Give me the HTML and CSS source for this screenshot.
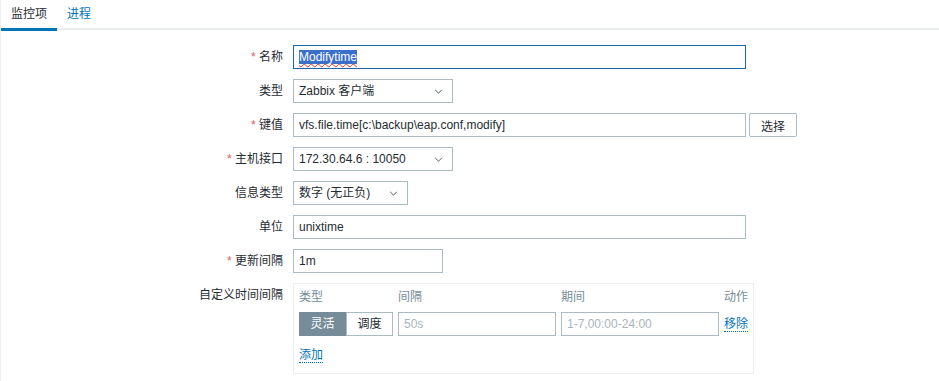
FILE: index.html
```html
<!DOCTYPE html>
<html lang="zh-CN">

<head>
  <meta charset="UTF-8" />
  <title>监控项</title>
  <link rel="stylesheet" href="styles.css">
</head>

<body>
  <!-- Tabs -->
  <div class="tabs">
    <span class="tab active">监控项</span>
    <span class="tab">进程</span>
  </div>

  <!-- Item form -->
  <div class="form">
    <label class="form-label"><span class="req">*</span> 名称</label>
    <div class="field">
      <div class="text-input focused w-wide"><span class="selected">Modifytime</span></div>
    </div>

    <label class="form-label">类型</label>
    <div class="field">
      <div class="select w-160"><span>Zabbix 客户端</span>
        <svg class="chevron" viewBox="0 0 10 6"><path d="M1 1l4 4 4-4" /></svg>
      </div>
    </div>

    <label class="form-label"><span class="req">*</span> 键值</label>
    <div class="field row">
      <input class="text-input w-wide" type="text" value="vfs.file.time[c:\backup\eap.conf,modify]">
      <button class="btn">选择</button>
    </div>

    <label class="form-label"><span class="req">*</span> 主机接口</label>
    <div class="field">
      <div class="select w-160"><span>172.30.64.6 : 10050</span>
        <svg class="chevron" viewBox="0 0 10 6"><path d="M1 1l4 4 4-4" /></svg>
      </div>
    </div>

    <label class="form-label">信息类型</label>
    <div class="field">
      <div class="select w-115"><span>数字 (无正负)</span>
        <svg class="chevron" viewBox="0 0 10 6"><path d="M1 1l4 4 4-4" /></svg>
      </div>
    </div>

    <label class="form-label">单位</label>
    <div class="field">
      <input class="text-input w-wide" type="text" value="unixtime">
    </div>

    <label class="form-label"><span class="req">*</span> 更新间隔</label>
    <div class="field">
      <input class="text-input w-150" type="text" value="1m">
    </div>

    <label class="form-label">自定义时间间隔</label>
    <div class="field">
      <div class="intervals">
        <div class="head">类型</div>
        <div class="head">间隔</div>
        <div class="head">期间</div>
        <div class="head">动作</div>

        <div class="segment">
          <span class="seg active">灵活</span>
          <span class="seg">调度</span>
        </div>
        <input class="text-input" type="text" placeholder="50s">
        <input class="text-input" type="text" placeholder="1-7,00:00-24:00">
        <a class="link">移除</a>

        <div class="add"><a class="link">添加</a></div>
      </div>
    </div>
  </div>
</body>

</html>
```

FILE: styles.css
```css
/* General */
body {
  margin: 0;
  font-family: "Liberation Sans", "Noto Sans CJK SC", sans-serif;
  font-size: 12px;
  color: #1f2c33;
  background: #fff;
  border-left: 1px solid #ebeef0;
  min-height: 381px;
  box-sizing: border-box;
}

/* Tabs */
.tabs {
  display: flex;
  border-bottom: 2px solid #ebeef0;
  height: 28px;
}

.tab {
  padding: 7px 10px 0;
  line-height: 14px;
  color: #0275b8;
  height: 21px;
}

.tab.active {
  color: #1f2c33;
  border-bottom: 3px solid #0275b8;
}

/* Form grid */
.form {
  display: grid;
  grid-template-columns: 282px 1fr;
  column-gap: 10px;
  row-gap: 10px;
  padding-top: 15px;
}

.form-label {
  text-align: right;
  line-height: 24px;
}

.req {
  color: #e45959;
}

.field {
  display: flex;
  align-items: flex-start;
}

.field.row {
  gap: 3px;
}

/* Inputs */
.text-input {
  box-sizing: border-box;
  height: 24px;
  border: 1px solid #acbbc2;
  padding: 0 5px;
  font-family: inherit;
  font-size: 12px;
  color: #1f2c33;
  background: #fff;
  line-height: 22px;
  outline: none;
  margin: 0;
}

.text-input::placeholder {
  color: #a9b5bb;
}

.text-input.focused {
  border-color: #1f65a6;
}

.selected {
  background: #3a6fcc;
  color: #fff;
  text-decoration: underline wavy #e0342e;
  text-decoration-thickness: 1px;
  text-underline-offset: 2px;
}

.w-wide { width: 453px; }
.w-160 { width: 160px; }
.w-150 { width: 150px; }
.w-115 { width: 115px; }

.select {
  box-sizing: border-box;
  height: 24px;
  border: 1px solid #acbbc2;
  padding: 0 9px 0 5px;
  display: flex;
  align-items: center;
  justify-content: space-between;
  line-height: 22px;
}

.chevron {
  width: 9px;
  height: 5px;
  fill: none;
  stroke: #4f5f68;
  stroke-width: 1.2;
}

.btn {
  box-sizing: border-box;
  height: 24px;
  width: 48px;
  border: 1px solid #acbbc2;
  border-radius: 2px;
  background: #fff;
  color: #1f2c33;
  font-family: inherit;
  font-size: 12px;
  padding: 0;
}

/* Custom intervals table */
.intervals {
  box-sizing: border-box;
  width: 461px;
  height: 91px;
  border: 1px solid #ebeef0;
  padding: 6px 5px 0;
  display: grid;
  grid-template-columns: 94px 158px 158px auto;
  column-gap: 5px;
  grid-template-rows: 14px 24px auto;
  row-gap: 8px;
}

.head {
  color: #768d99;
  line-height: 14px;
}

.head:last-of-type {
  text-align: right;
}

.segment {
  display: flex;
  height: 24px;
}

.seg {
  flex: 1;
  box-sizing: border-box;
  text-align: center;
  line-height: 22px;
  border: 1px solid #acbbc2;
  background: #fff;
}

.seg.active {
  background: #768d99;
  border-color: #768d99;
  color: #fff;
}

.intervals .text-input {
  width: 100%;
}

.link {
  color: #0275b8;
  border-bottom: 1px dotted #0275b8;
  line-height: 14px;
  align-self: center;
  justify-self: end;
}

.add {
  grid-column: 1 / -1;
  padding-top: 4px;
}

.add .link {
  display: inline-block;
}
```
